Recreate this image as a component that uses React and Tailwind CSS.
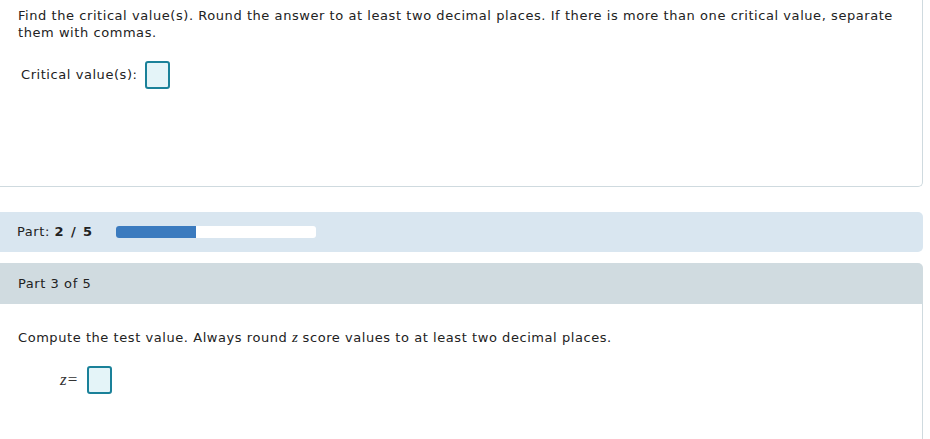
import React from "react";

const AnswerBox = () => (
  <span className="inline-block w-[25px] h-[28px] rounded-[3px] border-2 border-[#1a8199] bg-[#e4f4f8] align-middle" />
);

const serif = { fontFamily: '"Liberation Serif", "Times New Roman", serif' };

const App = () => {
  return (
    <div
      className="w-[930px] h-[439px] bg-white overflow-hidden text-[13px] tracking-[0.56px] text-[#222]"
      style={{ fontFamily: '"DejaVu Sans", Verdana, sans-serif' }}
    >
      {/* part 2 question */}
      <div className="w-[923px] h-[187px] border-r border-b border-[#cfdadf] rounded-br-[5px] pl-[18px] pr-[24px] pt-[7px]">
        <p className="leading-[17px]">
          Find the critical value(s). Round the answer to at least two decimal places. If there is more than one critical value, separate them with commas.
        </p>
        <div className="flex items-center gap-[7px] mt-[20px] pl-[3px]">
          <span>Critical value(s):</span>
          <AnswerBox />
        </div>
      </div>

      {/* progress */}
      <div className="mt-[25px] w-[923px] h-[40px] bg-[#d9e6f0] rounded-r-[5px] flex items-center pl-[17px]">
        <span>
          Part: <b className="tracking-[1.4px]">2 / 5</b>
        </span>
        <div className="ml-[23px] w-[200px] h-[12px] bg-white rounded-[3px] overflow-hidden">
          <div className="w-[80px] h-full bg-[#3b7bbf]" />
        </div>
      </div>

      {/* part 3 */}
      <div className="mt-[11px] w-[923px] h-[41px] bg-[#d0dbe0] rounded-tr-[5px] flex items-center pl-[18px]">
        Part 3 of 5
      </div>
      <div className="w-[923px] h-[200px] border-r border-[#cfdadf] pl-[18px] pt-[25px]">
        <p className="leading-[17px]">
          Compute the test value. Always round{" "}
          <i style={serif} className="text-[15px] tracking-normal">z</i>{" "}
          score values to at least two decimal places.
        </p>
        <div className="flex items-center mt-[20px] pl-[42px] gap-[9px]">
          <span style={serif} className="text-[17px] tracking-[1px] text-[#333]">
            <i>z</i>=
          </span>
          <AnswerBox />
        </div>
      </div>
    </div>
  );
};

export default App;
